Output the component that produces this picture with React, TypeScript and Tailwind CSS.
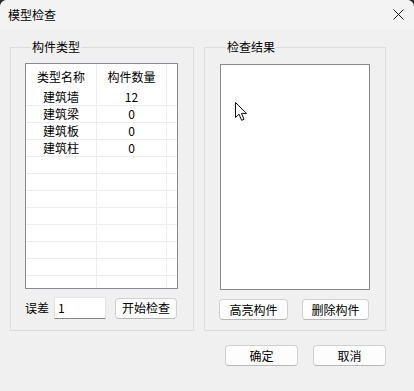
import { ReactNode } from 'react';

const FONT = "font-['Microsoft_YaHei','Noto_Sans_CJK_SC',sans-serif]";

const rows = [
  { name: '建筑墙', count: '12' },
  { name: '建筑梁', count: '0' },
  { name: '建筑板', count: '0' },
  { name: '建筑柱', count: '0' },
];

const EMPTY_ROWS = 7;

function WinButton({ children, className = '' }: { children: ReactNode; className?: string }) {
  return (
    <button
      className={`h-[21px] rounded-[4px] border border-[#d0d0d0] border-b-[#b8b8b8] bg-[#fdfdfd] text-[12px] leading-[14px] text-black ${className}`}
    >
      {children}
    </button>
  );
}

function GroupBox({ title, className = '', children }: { title: string; className?: string; children: ReactNode }) {
  return (
    <fieldset className={`border border-[#dcdcdc] ${className}`}>
      <legend className="ml-[6px] px-[1px] text-[12px] leading-[14px] text-black">{title}</legend>
      {children}
    </fieldset>
  );
}

function ComponentTable() {
  return (
    <div className="h-[226px] w-[153px] overflow-hidden border border-[#8a8a94] bg-white">
      <div className="flex h-[25px] items-center">
        <div className="w-[71px] border-r border-[#ececec] h-full flex items-center justify-center">类型名称</div>
        <div className="w-[70px] border-r border-[#ececec] h-full flex items-center justify-center">构件数量</div>
        <div className="flex-1" />
      </div>
      {rows.map((r) => (
        <div key={r.name} className="flex h-[17px] border-b border-[#ececec]">
          <div className="w-[71px] border-r border-[#ececec] flex items-center justify-center">{r.name}</div>
          <div className="w-[70px] border-r border-[#ececec] flex items-center justify-center">{r.count}</div>
          <div className="flex-1" />
        </div>
      ))}
      {Array.from({ length: EMPTY_ROWS }).map((_, i) => (
        <div key={i} className="flex h-[17px] border-b border-[#ececec]">
          <div className="w-[71px] border-r border-[#ececec]" />
          <div className="w-[70px] border-r border-[#ececec]" />
          <div className="flex-1" />
        </div>
      ))}
      <div className="flex h-full">
        <div className="w-[71px] border-r border-[#ececec]" />
        <div className="w-[70px] border-r border-[#ececec]" />
      </div>
    </div>
  );
}

function Cursor() {
  return (
    <svg className="absolute left-[14px] top-[37px]" width="13" height="20" viewBox="0 0 13 20">
      <path
        d="M0.5 0.5 L0.5 15.5 L4 12.2 L6.6 18.3 L9 17.3 L6.5 11.4 L11.5 11.4 Z"
        fill="white"
        stroke="#111"
        strokeWidth="1"
        strokeLinejoin="miter"
      />
    </svg>
  );
}

export default function App() {
  return (
    <div className={`h-[391px] w-[414px] bg-[#2b2b2b] ${FONT} text-[12px] text-black`}>
      <div className="flex h-full flex-col overflow-hidden rounded-t-[7px] bg-[#f0f0f0]">
        <div className="flex h-[29px] shrink-0 items-center justify-between bg-[#f3f3f3] pl-[8px] pr-[9px]">
          <span className="text-[12px] leading-[14px] pt-px">模型检查</span>
          <svg width="11" height="11" viewBox="0 0 11 11" className="mr-[1px]">
            <path d="M0.5 0.5 L10.5 10.5 M10.5 0.5 L0.5 10.5" stroke="#1a1a1a" strokeWidth="1" />
          </svg>
        </div>

        <div className="flex gap-[10px] pl-[10px] pt-[11px]">
          <GroupBox title="构件类型" className="h-[291px] w-[184px] pl-[14px] pt-[9px]">
            <ComponentTable />
            <div className="mt-[8px] flex items-center">
              <span className="w-[29px]">误差</span>
              <div className="flex h-[22px] w-[52px] items-center border border-[#e3e3e3] border-b-[#868686] bg-white pl-[3px]">
                1
              </div>
              <WinButton className="ml-[9px] w-[62px]">开始检查</WinButton>
            </div>
          </GroupBox>

          <GroupBox title="检查结果" className="h-[291px] w-[182px] pl-[15px] pt-[10px]">
            <div className="relative h-[226px] w-[150px] border border-[#8a8a94] bg-white">
              <Cursor />
            </div>
            <div className="mt-[9px] flex gap-[14px]">
              <WinButton className="-ml-[1px] w-[69px]">高亮构件</WinButton>
              <WinButton className="w-[67px]">删除构件</WinButton>
            </div>
          </GroupBox>
        </div>

        <div className="flex gap-[15px] pl-[225px] pt-[14px]">
          <WinButton className="w-[73px]">确定</WinButton>
          <WinButton className="w-[73px]">取消</WinButton>
        </div>
      </div>
    </div>
  );
}
